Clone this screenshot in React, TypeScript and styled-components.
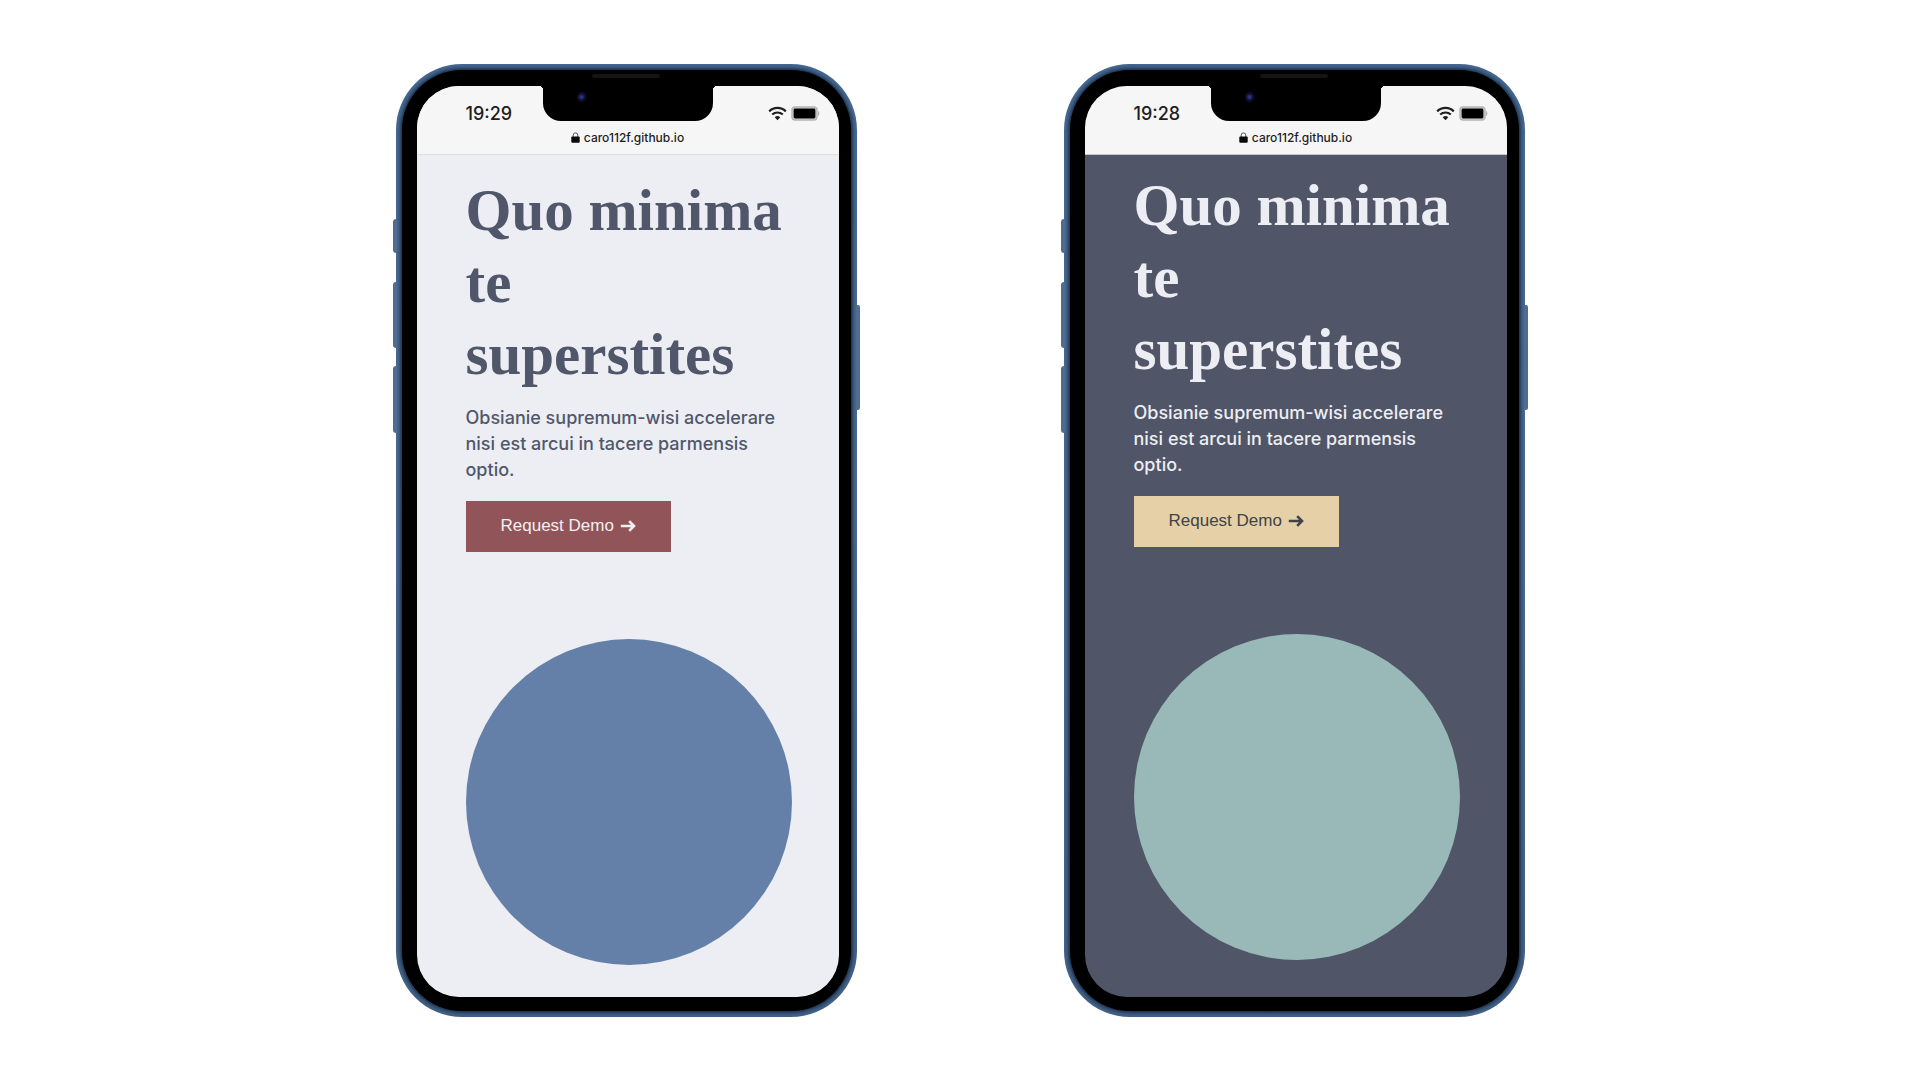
import React from "react";
import styled, { createGlobalStyle, ThemeProvider } from "styled-components";

const GlobalStyle = createGlobalStyle`
  *, *::before, *::after { box-sizing: border-box; }
  body { margin: 0; background: #ffffff; }
  h1, p { margin: 0; }
`;

interface Palette {
  page: string;
  text: string;
  rule: string;
  button: string;
  buttonText: string;
  circle: string;
  padTop: number;
  padBottom: number;
}

const light: Palette = {
  page: "#edeef3",
  text: "#50576b",
  rule: "#dcdddd",
  button: "#905459",
  buttonText: "#f2eff1",
  circle: "#6580a8",
  padTop: 19,
  padBottom: 32,
};

const dark: Palette = {
  page: "#505567",
  text: "#edeef3",
  rule: "#c4c6cb",
  button: "#e5d0a7",
  buttonText: "#404347",
  circle: "#99b9b8",
  padTop: 14,
  padBottom: 37,
};

const Stage = styled.main`
  min-height: 100vh;
  display: flex;
  flex-wrap: wrap;
  justify-content: center;
  align-items: center;
  gap: 40px 207px;
`;

const Frame = styled.article`
  position: relative;
  flex: 0 1 461px;
  padding: 6px;
  border-radius: 66px;
  background: linear-gradient(#456892, #4b6a90 50%, #436288);
`;

const SideKey = styled.span<{ $side: "left" | "right"; $top: number; $height: number }>`
  position: absolute;
  ${(p) => p.$side}: -3px;
  top: ${(p) => p.$top}px;
  width: 4px;
  height: ${(p) => p.$height}px;
  background: #4f6d92;
  border-radius: ${(p) => (p.$side === "left" ? "3px 0 0 3px" : "0 2px 2px 0")};
`;

const Bezel = styled.div`
  padding: 16px 12px 14px 15px;
  border-radius: 60px;
  background: #000000;
  box-shadow: 0 0 4px 1px #0b1a2c;
`;

const Screen = styled.div`
  position: relative;
  overflow: hidden;
  border-radius: 42px;
  background: ${(p) => p.theme.page};
`;

const Notch = styled.div`
  position: absolute;
  top: 0;
  left: 50%;
  width: 170px;
  height: 35px;
  margin-left: -85px;
  background: #000000;
  border-radius: 0 0 18px 18px;

  &::before,
  &::after {
    content: "";
    position: absolute;
    top: 0;
    width: 4px;
    height: 4px;
  }
  &::before {
    right: 100%;
    background: radial-gradient(circle at 0 100%, transparent 4px, #000000 4px);
  }
  &::after {
    left: 100%;
    background: radial-gradient(circle at 100% 100%, transparent 4px, #000000 4px);
  }
`;

const Camera = styled.span`
  position: absolute;
  left: 34px;
  top: 5px;
  width: 12px;
  height: 12px;
  border-radius: 50%;
  background: radial-gradient(circle at 38% 50%, #2d3474 0 1px, #10123a 3px, #05061a 5px, #000000 6px);
`;

const Speaker = styled.span`
  position: absolute;
  left: 50%;
  top: 10px;
  width: 68px;
  height: 4px;
  margin-left: -34px;
  border-radius: 2px;
  background: #141414;
`;

const BrowserBar = styled.header`
  display: flex;
  flex-direction: column;
  padding-top: 17px;
  background: #f6f6f6;
  border-bottom: 1px solid ${(p) => p.theme.rule};
  color: #1d1d1d;
  font-family: Inter, "Liberation Sans", sans-serif;
`;

const StatusRow = styled.div`
  display: flex;
  justify-content: space-between;
  align-items: center;
  height: 22px;
  padding: 0 19px 0 49px;
`;

const Time = styled.time`
  font-size: 18px;
  font-weight: 500;
  line-height: 22px;
`;

const Indicators = styled.div`
  display: flex;
  align-items: center;
  gap: 4px;
`;

const Address = styled.div`
  display: flex;
  justify-content: center;
  align-items: center;
  gap: 4px;
  height: 29px;
  padding-bottom: 4px;
  font-size: 12px;
  font-weight: 500;
`;

const Content = styled.section`
  padding: ${(p) => p.theme.padTop}px 47px ${(p) => p.theme.padBottom}px 49px;
  color: ${(p) => p.theme.text};
`;

const Title = styled.h1`
  font-family: "Liberation Serif", serif;
  font-size: 59px;
  font-weight: 700;
  line-height: 72px;
`;

const Lead = styled.p`
  margin-top: 15px;
  font-family: Inter, "Liberation Sans", sans-serif;
  font-size: 18px;
  font-weight: 500;
  line-height: 26px;
`;

const DemoButton = styled.button`
  display: flex;
  align-items: center;
  gap: 6px;
  height: 51px;
  margin-top: 18px;
  padding: 0 35px;
  border: 0;
  background: ${(p) => p.theme.button};
  color: ${(p) => p.theme.buttonText};
  font-family: "Liberation Sans", Arial, sans-serif;
  font-size: 17px;
  cursor: pointer;
`;

const Circle = styled.div`
  aspect-ratio: 1;
  margin-top: 87px;
  border-radius: 50%;
  background: ${(p) => p.theme.circle};
`;

const LockIcon = () => (
  <svg width="9" height="11" viewBox="0 0 9 11" aria-hidden="true">
    <path d="M2.2 5V3.2a2.3 2.3 0 0 1 4.6 0V5" fill="none" stroke="#555" strokeWidth="1" />
    <rect x="0.3" y="4.4" width="8.4" height="6.3" rx="1" fill="#0a0a0a" />
  </svg>
);

const WifiIcon = () => (
  <svg width="19" height="15" viewBox="0 0 19 15" fill="none" aria-hidden="true">
    <path d="M1.2 5.4C5.8.8 13.2.8 17.8 5.4" stroke="#1f1f1f" strokeWidth="2.2" />
    <path d="M4.2 8.6C7.2 5.7 11.8 5.7 14.8 8.6" stroke="#1f1f1f" strokeWidth="2.1" />
    <path d="M6.7 11.2C8.4 9.7 10.6 9.7 12.3 11.2L9.5 14.2Z" fill="#1f1f1f" />
  </svg>
);

const BatteryIcon = () => (
  <svg width="29" height="15" viewBox="0 0 29 15" aria-hidden="true">
    <rect x="1" y="1" width="25" height="13" rx="3" fill="#d8d8d8" stroke="#b4b4b4" strokeWidth="1.4" />
    <rect x="2.6" y="2.6" width="21.8" height="9.8" rx="1.4" fill="#000" />
    <path d="M27.3 5v5c1.3-.6 1.3-4.4 0-5Z" fill="#9a9a9a" />
  </svg>
);

const ArrowIcon = () => (
  <svg width="16" height="14" viewBox="0 0 16 14" fill="none" aria-hidden="true">
    <path d="M.8 7H14M9.2 2.2 14 7l-4.8 4.8" stroke="currentColor" strokeWidth="2.6" />
  </svg>
);

const Phone = ({ palette, time }: { palette: Palette; time: string }) => (
  <ThemeProvider theme={palette}>
    <Frame>
      <SideKey $side="left" $top={155} $height={34} />
      <SideKey $side="left" $top={218} $height={66} />
      <SideKey $side="left" $top={302} $height={67} />
      <SideKey $side="right" $top={241} $height={105} />
      <Bezel>
        <Speaker />
        <Screen>
          <BrowserBar>
            <StatusRow>
              <Time>{time}</Time>
              <Indicators>
                <WifiIcon />
                <BatteryIcon />
              </Indicators>
            </StatusRow>
            <Address>
              <LockIcon />
              <span>caro112f.github.io</span>
            </Address>
          </BrowserBar>
          <Notch>
            <Camera />
          </Notch>
          <Content>
            <Title>Quo minima te superstites</Title>
            <Lead>Obsianie supremum-wisi accelerare nisi est arcui in tacere parmensis optio.</Lead>
            <DemoButton type="button">
              Request Demo
              <ArrowIcon />
            </DemoButton>
            <Circle />
          </Content>
        </Screen>
      </Bezel>
    </Frame>
  </ThemeProvider>
);

export default function App() {
  return (
    <>
      <GlobalStyle />
      <Stage>
        <Phone palette={light} time="19:29" />
        <Phone palette={dark} time="19:28" />
      </Stage>
    </>
  );
}
